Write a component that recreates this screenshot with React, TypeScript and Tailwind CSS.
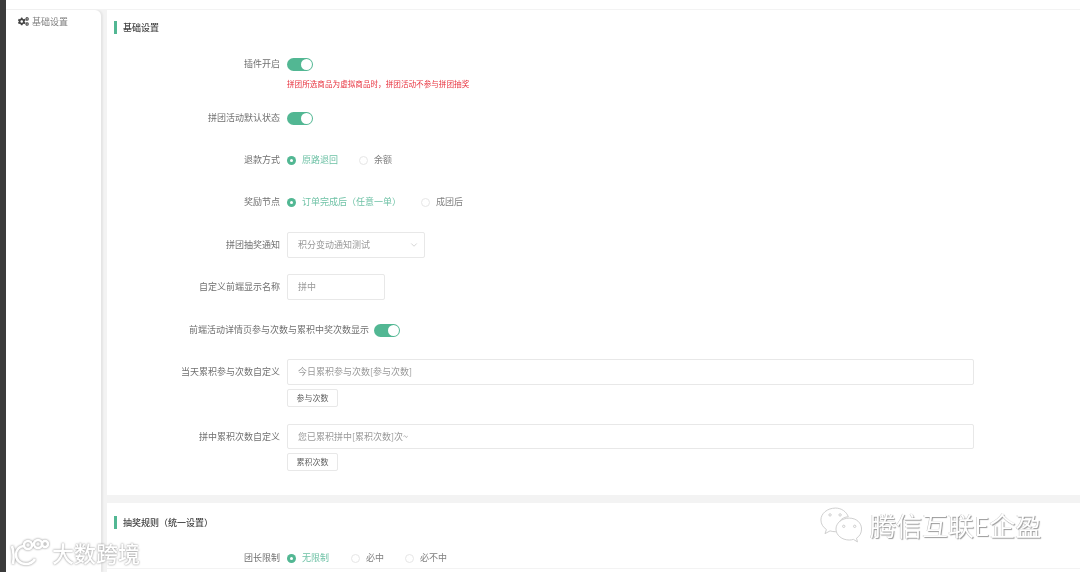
import type { ReactNode } from "react";
import { FaCogs } from "react-icons/fa";
import { ChevronDown } from "lucide-react";

const font = { fontFamily: '"Noto Sans CJK SC", "Liberation Sans", sans-serif' };

function SectionTitle({ children }: { children: ReactNode }) {
  return (
    <div className="flex items-center h-[13px] pl-[7px]">
      <span className="w-[3px] h-[13px] bg-[#52b793]" />
      <span className="ml-[6px] text-[9px] font-medium text-[#444]">{children}</span>
    </div>
  );
}

function Row({ label, className, children }: { label: string; className: string; children: ReactNode }) {
  return (
    <div className={`flex items-center ${className}`}>
      <label className="w-[173px] shrink-0 text-right text-[9px] text-[#707070] whitespace-nowrap">{label}</label>
      <div className="ml-[7px] flex items-center flex-1">{children}</div>
    </div>
  );
}

function Toggle() {
  return (
    <span className="flex items-center justify-end w-[26px] h-[13px] rounded-full bg-[#52b793] pr-[1px]">
      <span className="w-[11px] h-[11px] rounded-full bg-white" />
    </span>
  );
}

function Radio({ text, checked, className }: { text: string; checked?: boolean; className?: string }) {
  return (
    <span className={`flex items-center ${className ?? ""}`}>
      {checked ? (
        <span className="flex items-center justify-center w-[9px] h-[9px] rounded-full bg-[#52b793]">
          <span className="w-[3px] h-[3px] rounded-full bg-white" />
        </span>
      ) : (
        <span className="w-[9px] h-[9px] rounded-full border border-[#e6e6e6] bg-white" />
      )}
      <span className={`ml-[6px] text-[9px] whitespace-nowrap ${checked ? "text-[#6fc2a6]" : "text-[#808080]"}`}>{text}</span>
    </span>
  );
}

function TextBox({ value, className }: { value: string; className: string }) {
  return (
    <div className={`flex items-center pl-[10px] border border-[#e8e8e8] rounded-[2px] bg-white text-[9px] text-[#999] ${className}`}>
      {value}
    </div>
  );
}

function SmallButton({ children }: { children: ReactNode }) {
  return (
    <div className="ml-[180px] mt-[4px] flex items-center justify-center w-[51px] h-[18px] border border-[#e8e8e8] rounded-[2px] text-[8px] text-[#606060]">
      {children}
    </div>
  );
}

function WeChatMark() {
  return (
    <svg viewBox="0 0 46 40" className="w-[42px] h-[37px]" fill="#fff" stroke="#c4c4c4" strokeWidth="0.9">
      <path d="M17 2C8 2 1 8 1 15c0 4.500 2.500 8 6 10.500L5.500 30 11 27c2 .6 4 .9 6 .9 1 0 2 0 3-.2C18 17 24 12 31 11.500 29 6 23.500 2 17 2z" />
      <path d="M32 13c-8 0-14.500 5.300-14.500 12S24 37 32 37c1.600 0 3.200-.2 4.600-.7L41 39l-1-4c3.500-2.200 5.500-5.800 5.500-10C45.500 18.300 40 13 32 13z" />
      <circle cx="11" cy="9.500" r="1.300" fill="none" />
      <circle cx="22" cy="9.500" r="1.300" fill="none" />
      <circle cx="26" cy="22" r="1.300" fill="none" />
      <circle cx="38" cy="22" r="1.300" fill="none" />
    </svg>
  );
}

function CrossBorderMark() {
  return (
    <svg viewBox="0 0 40 28" className="w-[40px] h-[28px]" fill="none" stroke="#fff" strokeWidth="2.600" style={{ filter: "drop-shadow(0 0 1px #888)" }}>
      <path d="M3 8c2 6 2 12 1 18" />
      <path d="M16 8c-6 0-9 4-9 9s4 9 10 9c4 0 7-2 9-5" />
      <circle cx="19" cy="7" r="4" />
      <circle cx="29" cy="6" r="4" />
      <circle cx="36" cy="6" r="3" />
    </svg>
  );
}

export default function App() {
  return (
    <div className="relative w-[1080px] h-[572px] overflow-hidden bg-white blur-[0.4px]" style={font}>
      <div className="flex h-full">
        <div className="w-[6px] shrink-0 bg-[#3b3b3b]" />
        <div className="flex-1 flex flex-col min-w-0">
          <div className="h-[10px] shrink-0 bg-white border-b border-[#f3f3f3]" />
          <div className="flex flex-1 bg-[#f3f3f3] min-h-0">
            {/* 侧边菜单 */}
            <aside className="w-[95px] shrink-0 bg-white rounded-tr-[6px] shadow-[2px_0_2px_rgba(0,0,0,0.06)]">
              <div className="flex items-center h-[23px] pl-[12px]">
                <FaCogs className="w-[11px] h-[11px] text-[#444]" />
                <span className="ml-[3px] text-[9px] text-[#808080]">基础设置</span>
              </div>
            </aside>

            <main className="ml-[6px] flex-1 min-w-0 flex flex-col">
              {/* 基础设置 */}
              <section className="h-[485px] shrink-0 bg-white pt-[11px]">
                <SectionTitle>基础设置</SectionTitle>

                <Row label="插件开启" className="mt-[17px] h-[26px]">
                  <Toggle />
                </Row>
                <div className="ml-[180px] h-[14px] flex items-center text-[7.600px] text-[#e8333f] whitespace-nowrap">
                  拼团所选商品为虚拟商品时，拼团活动不参与拼团抽奖
                </div>

                <Row label="拼团活动默认状态" className="mt-[14px] h-[26px]">
                  <Toggle />
                </Row>

                <Row label="退款方式" className="mt-[16px] h-[26px]">
                  <Radio text="原路退回" checked />
                  <Radio text="余额" className="ml-[21px]" />
                </Row>

                <Row label="奖励节点" className="mt-[16px] h-[26px]">
                  <Radio text="订单完成后（任意一单）" checked />
                  <Radio text="成团后" className="ml-[20px]" />
                </Row>

                <Row label="拼团抽奖通知" className="mt-[17px] h-[26px]">
                  <div className="relative">
                    <TextBox value="积分变动通知测试" className="w-[138px] h-[26px]" />
                    <ChevronDown className="absolute right-[6px] top-[8px] w-[10px] h-[10px] text-[#bbb]" strokeWidth={1.500} />
                  </div>
                </Row>

                <Row label="自定义前端显示名称" className="mt-[16px] h-[26px]">
                  <TextBox value="拼中" className="w-[98px] h-[26px]" />
                </Row>

                <div className="mt-[17px] h-[26px] flex items-center">
                  <label className="ml-[82px] text-[9px] text-[#707070] whitespace-nowrap">前端活动详情页参与次数与累积中奖次数显示</label>
                  <span className="ml-[5px]">
                    <Toggle />
                  </span>
                </div>

                <Row label="当天累积参与次数自定义" className="mt-[16px] h-[26px]">
                  <TextBox value="今日累积参与次数[参与次数]" className="w-[687px] h-[26px]" />
                </Row>
                <SmallButton>参与次数</SmallButton>

                <Row label="拼中累积次数自定义" className="mt-[17px] h-[25px]">
                  <TextBox value="您已累积拼中[累积次数]次~" className="w-[687px] h-[25px]" />
                </Row>
                <SmallButton>累积次数</SmallButton>
              </section>

              {/* 抽奖规则 */}
              <section className="mt-[8px] flex-1 bg-white pt-[13px]">
                <SectionTitle>抽奖规则（统一设置）</SectionTitle>
                <Row label="团长限制" className="mt-[21px] h-[16px]">
                  <Radio text="无限制" checked />
                  <Radio text="必中" className="ml-[22px]" />
                  <Radio text="必不中" className="ml-[21px]" />
                </Row>
                <div className="mt-[2px] border-t border-[#f3f3f3]" />
              </section>
            </main>
          </div>
        </div>
      </div>

      {/* 水印 */}
      <div className="absolute left-[9px] top-[537px] flex items-center">
        <CrossBorderMark />
        <span className="ml-[3px] text-[22px] leading-[30px] font-medium text-white [text-shadow:0_0_2px_#777]">大数跨境</span>
      </div>
      <div className="absolute left-[820px] top-[506px] flex items-center">
        <WeChatMark />
        <span className="ml-[8px] text-[26px] leading-[36px] text-white whitespace-nowrap [text-shadow:1px_1px_1px_#9a9a9a,-0.5px_-0.5px_0.5px_#bdbdbd]">腾信互联E企盈</span>
      </div>
    </div>
  );
}
